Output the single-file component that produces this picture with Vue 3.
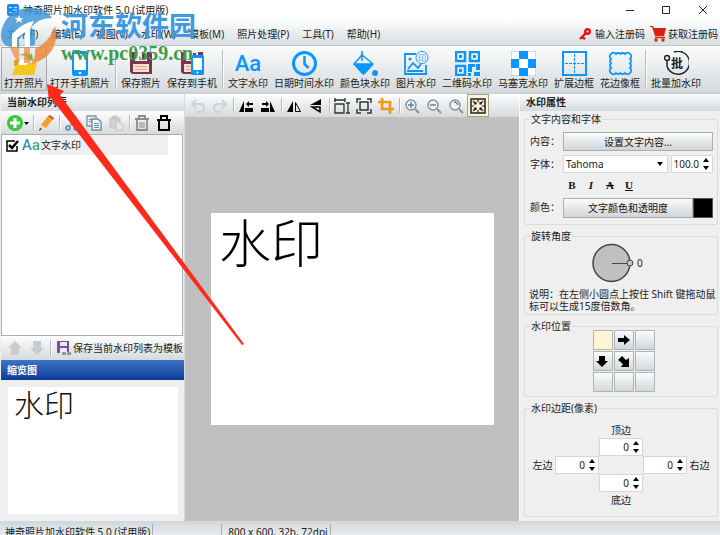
<script setup>
import { ref } from 'vue'

const menus = ['文件(F)', '编辑(E)', '视图(V)', '水印(W)', '模板(M)', '照片处理(P)', '工具(T)', '帮助(H)']

const floppy = '<path fill="#7d3450" d="M1 1h22v22H3l-2-2z"/><path fill="#f4efef" d="M6 1h12v9H6z"/><path fill="#7d3450" d="M13 2h3v7h-3z"/><path fill="#f7dfd0" d="M4 13h16v8H4z"/><path stroke="#e0a98d" d="M6 15.500h12M6 18.500h12"/>'

const tools = [
  { label: '打开照片', active: true, icon: '<path fill="#d9a514" d="M2 9h5l2 2h4v4H2z"/><path fill="#fff" stroke="#ccc" stroke-width=".5" d="M6 14l2-7 9 3-1 6z"/><path fill="#7cb83c" d="M7 5q6-5 11-1l2-2 1 8-7-2 2-2q-4-3-9-1z"/><path fill="#f6c71c" d="M4 14h10l2-2h9l-3 12H0z"/>' },
  { label: '打开手机照片', icon: '<rect x="4" y="0" width="16" height="25" rx="2" fill="#0a96ff"/><path fill="#fff" d="M6 3h12v16H6z"/><circle cx="12" cy="22" r="1.300" fill="#fff"/>' },
  { sep: true },
  { label: '保存照片', icon: floppy },
  { label: '保存到手机', icon: floppy + '<rect x="11" y="4" width="13" height="20" rx="1.500" fill="#0a96ff"/><path fill="#fff" d="M13 7h9v12h-9z"/><circle cx="17.500" cy="21.500" r="1" fill="#fff"/>' },
  { sep: true },
  { label: '文字水印', letters: true },
  { label: '日期时间水印', icon: '<circle cx="12.500" cy="12.500" r="11" fill="none" stroke="#0a96ff" stroke-width="3"/><path fill="none" stroke="#0a96ff" stroke-width="2.500" d="M12.500 5v8l4 4"/>' },
  { label: '颜色块水印', icon: '<path fill="none" stroke="#0a96ff" stroke-width="1.500" d="M9 0v10M8 3l12 10M9 4L1 13h18"/><path fill="#0a96ff" d="M0 13h21l-9 10Q10 25 8 22z"/><circle cx="22" cy="22" r="3" fill="#0a96ff"/>' },
  { label: '图片水印', icon: '<path fill="none" stroke="#0a96ff" stroke-width="1.800" d="M12 3H1v20h21v-9M4 18l5-6 5 5 3-4M3 20h16"/><circle cx="6" cy="8" r="1.500" fill="#0a96ff"/><circle cx="18" cy="6.500" r="6" fill="#fff" stroke="#0a96ff"/><text x="18" y="9.500" font-size="8" text-anchor="middle" fill="#0a96ff">印</text>' },
  { label: '二维码水印', icon: '<path fill="none" stroke="#0a96ff" stroke-width="2.500" d="M1 1h9v9H1zM15 1h9v9h-9zM1 15h9v9H1z"/><path fill="#0a96ff" d="M4 4h3v3H4zM18 4h3v3h-3zM4 18h3v3H4zM13 13h7v3h-3v5h-4zM21 13h4v6h-4zM19 21h6v4h-6zM13 22h3v3h-3z"/>' },
  { label: '马塞克水印', icon: '<path fill="#fff" stroke="#7cc6ff" d="M0 0h25v25H0z"/><path fill="#0a96ff" d="M8 0h9v8H8zM0 8h8v9H0zM17 8h8v9h-8zM8 17h9v8H8z"/>' },
  { label: '扩展边框', icon: '<path fill="none" stroke="#0a96ff" stroke-width="2" d="M1 1h23v23H1z"/><path fill="none" stroke="#0a96ff" stroke-dasharray="3 1" d="M12.500 3v19M3 12.500h19"/>' },
  { label: '花边像框', icon: '<path fill="none" stroke="#0a96ff" stroke-width="1.800" d="M3 8A3 3 0 0 1 3 3 3 3 0 0 1 8 3 3 3 0 0 1 12.500 3 3 3 0 0 1 17 3 3 3 0 0 1 22 3 3 3 0 0 1 22 8 3 3 0 0 1 22 12.500 3 3 0 0 1 22 17 3 3 0 0 1 22 22 3 3 0 0 1 17 22 3 3 0 0 1 12.500 22 3 3 0 0 1 8 22 3 3 0 0 1 3 22 3 3 0 0 1 3 17 3 3 0 0 1 3 12.500 3 3 0 0 1 3 8z"/>' },
  { sep: true },
  { label: '批量加水印', icon: '<path fill="none" stroke="#222" stroke-width="1.500" d="M10 1a11.500 11.500 0 1 1-7 14"/><circle cx="3" cy="7" r="2.500" fill="none" stroke="#222" stroke-width="1.500"/><path stroke="#222" stroke-width="1.500" d="M3 10v5"/><text x="13" y="17" font-size="12" font-weight="700" text-anchor="middle" fill="#222">批</text>' }
]

const magnifier = '<circle cx="7" cy="7" r="5" fill="#f2f4f6" stroke="#8b8f93" stroke-width="1.400"/><path stroke="#8b8f93" stroke-width="2" d="M11 11l4 4"/>'

const canvasTools = [
  { name: '撤销', icon: '<path fill="none" stroke="#cfd1d3" stroke-width="2" d="M6 2L2 6l4 4M2 6h8q4 0 4 4t-4 4H6"/>' },
  { name: '重做', icon: '<path fill="none" stroke="#cfd1d3" stroke-width="2" d="M10 2l4 4-4 4M14 6H6q-4 0-4 4t4 4h3"/>' },
  { sep: true },
  { name: '向左旋转', icon: '<path d="M1 14L6 3v11zM7 10h8v4H7zM8 6l3-3v2h4v2h-4v2z"/>' },
  { name: '向右旋转', icon: '<path d="M15 14L10 3v11zM1 10h8v4H1zM9 6L6 3v2H2v2h4v2z"/>' },
  { sep: true },
  { name: '水平翻转', icon: '<path d="M1 14L7 3v11z"/><path fill="none" stroke="#000" d="M9.500 4.500v9h5z"/>' },
  { name: '垂直翻转', icon: '<path d="M2 7l11-6v6z"/><path fill="none" stroke="#000" stroke-width="1.500" d="M4 9h8v5z"/>' },
  { sep: true },
  { name: '调整大小', icon: '<path fill="none" stroke="#333" stroke-width="1.300" d="M1 6h9v9H1zM0 2h11M1 0v4M11 0v4M14 5v10M12 5h4M12 15h4"/>' },
  { name: '画布大小', icon: '<path fill="none" stroke="#333" stroke-width="1.500" d="M1 5V1h4M11 1h4v4M15 11v4h-4M5 15H1v-4M4 4h8v8H4z"/>' },
  { name: '裁剪', icon: '<path fill="none" stroke="#f39a12" stroke-width="2.600" d="M4 0v11h12M0 4h12v12"/>' },
  { sep: true },
  { name: '放大', icon: magnifier + '<path stroke="#4a86c0" stroke-width="1.500" d="M4 7h6M7 4v6"/>' },
  { name: '缩小', icon: magnifier + '<path stroke="#4a86c0" stroke-width="1.500" d="M4 7h6"/>' },
  { name: '实际大小', icon: magnifier + '<path fill="none" stroke="#4a86c0" stroke-width="1.500" d="M6 4q3 0 4 3"/>' },
  { name: '适合窗口', active: true, icon: '<path fill="none" stroke="#222" stroke-width="1.500" d="M1 1h14v14H1z"/><path fill="none" stroke="#222" stroke-width="1.200" d="M8 1v3M8 12v3M1 8h3M12 8h3M3 3l3 3M13 3l-3 3M3 13l3-3M13 13l-3-3M6 4v2H4M10 4v2h2M6 12v-2H4M10 12v-2h2"/>' }
]

const listTools = [
  { name: '添加', wide: true, icon: '<circle cx="8" cy="8" r="8" fill="#3cc83c"/><path stroke="#fff" stroke-width="3" d="M3 8h10M8 3v10"/><path d="M17 7h5l-2.500 3z"/>' },
  { sep: true },
  { name: '编辑', icon: '<path fill="#f2a22c" d="M3 10l7-9 5 3-7 9z"/><path fill="#e0503c" d="M10 1l2-1 4 3-1 2z"/><path fill="#f3d9b0" d="M3 10l5 3-6 2z"/><path fill="#333" d="M2 13l2 1-3 2z"/>' },
  { sep: true },
  { name: '剪切', icon: '<path stroke="#9a9da0" stroke-width="1.500" d="M12 1L6 11M5 1l6 10"/><circle cx="4" cy="13" r="2" fill="none" stroke="#4f86c0" stroke-width="1.500"/><circle cx="12" cy="13" r="2" fill="none" stroke="#4f86c0" stroke-width="1.500"/>' },
  { name: '复制', icon: '<path fill="#e8ecf0" stroke="#8b9299" stroke-width="1.300" d="M1 1h9v10H1z"/><path fill="#f4f6f8" stroke="#7b848c" stroke-width="1.300" d="M6 4h6l3 3v8H6z"/><path stroke="#5a8abb" d="M8 8.500h5M8 10.500h5M8 12.500h5M3 4.500h3M3 6.500h3"/>' },
  { name: '粘贴', icon: '<path fill="#cfd1d3" stroke="#c2c4c6" d="M2 3h10v10H2zM5 1h4v3H5z"/><path fill="#e6e7e8" stroke="#c0c2c4" d="M8 7h4l3 3v5H8z"/>' },
  { sep: true },
  { name: '删除', icon: '<path fill="none" stroke="#8c8c8c" stroke-width="1.800" d="M1 4h14M5 4V1h6v3M3 5v10h10V5"/><path stroke="#8c8c8c" d="M6 7v6M8 7v6M10 7v6"/>' },
  { name: '全部删除', icon: '<path fill="none" stroke="#000" stroke-width="2" d="M1 5h14M5 5V1h6v4M3 5v10h10V5"/>' }
]

const styles = [
  { name: '粗体', cls: 'bold', text: 'B' },
  { name: '斜体', cls: 'italic', text: 'I' },
  { name: '删除线', cls: 'strike', text: 'A' },
  { name: '下划线', cls: 'under', text: 'U' }
]

const positions = [
  { name: '左上', icon: '', active: true },
  { name: '中上', icon: 'M1 4h6V1l6 5-6 5V8H1z' },
  { name: '右上', icon: '' },
  { name: '左中', icon: 'M3 1h6v5h3l-6 6-6-6h3z' },
  { name: '居中', icon: 'M1 5l4-4 4 4 3-2v9H4l2-3z' },
  { name: '右中', icon: '' },
  { name: '左下', icon: '' },
  { name: '中下', icon: '' },
  { name: '右下', icon: '' }
]

const margins = [
  { key: 'top', label: '顶边' },
  { key: 'left', label: '左边' },
  { key: 'right', label: '右边' },
  { key: 'bottom', label: '底边' }
]

const shown = ref(true)
const font = ref('Tahoma')
const size = ref('100.0')
const margin = ref({ top: 0, left: 0, right: 0, bottom: 0 })
</script>

<template>
  <div class="app" lang="zh-CN">
    <header class="head">
      <div class="title">
        <svg class="app-icon" viewBox="0 0 12 12"><rect width="12" height="12" rx="2" fill="#1e8cf5" /><path stroke="#bfe0ff" d="M2 3.500h3M7 3.500h3M2 8.500h3M7 8.500h3M6 6h4" /></svg>
        <span class="title-text">神奇照片加水印软件 5.0 (试用版)</span>
        <div class="win">
          <button aria-label="最小化"><svg viewBox="0 0 10 10"><path d="M1 5.500h8" /></svg></button>
          <button aria-label="最大化"><svg viewBox="0 0 10 10"><path d="M1.500 1.500h7v7h-7z" /></svg></button>
          <button aria-label="关闭"><svg viewBox="0 0 10 10"><path d="M1 1l8 8M9 1L1 9" /></svg></button>
        </div>
      </div>
      <nav class="menu">
        <a v-for="m in menus" :key="m" href="#">{{ m }}</a>
        <a class="reg first" href="#">
          <svg class="key" viewBox="0 0 12 12"><circle cx="8.500" cy="3.500" r="2.300" fill="none" stroke="#e81313" stroke-width="2.400" /><path fill="none" stroke="#e81313" stroke-width="2.400" d="M7 5l-6 6M3 9l3 2" /></svg>
          输入注册码
        </a>
        <a class="reg" href="#">
          <svg class="cart" viewBox="0 0 16 16"><path fill="#d92312" d="M0 0h3l1 2h12l-2 8H5L2 1H0z" /><path stroke="#d92312" stroke-width="1.500" d="M5 11.500h10" /><circle cx="6" cy="14" r="1.700" fill="#d92312" /><circle cx="13" cy="14" r="1.700" fill="#d92312" /></svg>
          获取注册码
        </a>
      </nav>
    </header>

    <div class="toolbar">
      <template v-for="(t, i) in tools" :key="i">
        <span v-if="t.sep" class="sep"></span>
        <button v-else class="tool" :class="{ active: t.active }">
          <span v-if="t.letters" class="letters">Aa</span>
          <svg v-else viewBox="0 0 25 25" v-html="t.icon"></svg>
          <span>{{ t.label }}</span>
        </button>
      </template>
    </div>

    <main class="body">
      <aside class="left">
        <h2 class="bar-title">当前水印列表</h2>
        <div class="strip list-strip">
          <template v-for="(t, i) in listTools" :key="i">
            <span v-if="t.sep" class="sep"></span>
            <button v-else class="mini" :class="{ wide: t.wide }" :aria-label="t.name">
              <svg :viewBox="t.wide ? '0 0 22 16' : '0 0 16 16'" v-html="t.icon"></svg>
            </button>
          </template>
        </div>
        <div class="list">
          <label class="row">
            <input v-model="shown" type="checkbox">
            <svg class="tick" viewBox="0 0 13 13"><path fill="none" stroke="#000" stroke-width="1.500" d="M11 7v5H1V2h8" /><path fill="none" stroke="#000" stroke-width="2.500" d="M3 6l3 3 6-7" /></svg>
            <span class="aa">Aa</span>
            <span class="name">文字水印</span>
          </label>
        </div>
        <div class="strip save-strip">
          <button class="mini" aria-label="上移"><svg viewBox="0 0 16 16"><path fill="#c9cccf" d="M8 1l7 7h-3v7H4V8H1z" /></svg></button>
          <button class="mini" aria-label="下移"><svg viewBox="0 0 16 16"><path fill="#c9cccf" d="M8 15l7-7h-3V1H4v7H1z" /></svg></button>
          <span class="sep"></span>
          <button class="save">
            <svg viewBox="0 0 16 16"><path fill="#7b4fa0" d="M1 1h12v12H1z" /><path fill="#eee8f4" d="M4 2h7v4H4zM4 8h7v5H4z" /><path stroke="#999" stroke-width="3" stroke-dasharray="4 1" d="M6 13.500h9" /></svg>
            保存当前水印列表为模板
          </button>
        </div>
        <h2 class="blue-title">缩览图</h2>
        <div class="thumb-wrap"><div class="thumb">水印</div></div>
      </aside>

      <section class="center">
        <div class="strip canvas-strip">
          <template v-for="(t, i) in canvasTools" :key="i">
            <span v-if="t.sep" class="sep"></span>
            <button v-else class="mini" :class="{ active: t.active }" :aria-label="t.name">
              <svg viewBox="0 0 16 16" v-html="t.icon"></svg>
            </button>
          </template>
        </div>
        <div class="stage"><div class="photo">水印</div></div>
      </section>

      <aside class="right">
        <h2 class="bar-title">水印属性</h2>
        <div class="groups">
          <fieldset class="text-group">
            <legend>文字内容和字体</legend>
            <div class="field"><span class="lab">内容：</span><button class="btn">设置文字内容...</button></div>
            <div class="field font-row">
              <label class="lab" for="font">字体：</label>
              <div class="select">
                <select id="font" v-model="font"><option>Tahoma</option></select>
                <svg viewBox="0 0 6 4"><path d="M0 0h6L3 4z" /></svg>
              </div>
              <div class="spin size">
                <input v-model="size" type="text" aria-label="字号">
                <svg viewBox="0 0 6 12"><path d="M0 4l3-4 3 4zM0 8h6l-3 4z" /></svg>
              </div>
            </div>
            <div class="styles">
              <button v-for="s in styles" :key="s.cls" :class="s.cls" :aria-label="s.name">{{ s.text }}</button>
            </div>
            <div class="field color-row">
              <span class="lab">颜色：</span><button class="btn">文字颜色和透明度</button><button class="swatch" aria-label="文字颜色"></button>
            </div>
          </fieldset>

          <fieldset class="angle-group">
            <legend>旋转角度</legend>
            <div class="dial">
              <svg viewBox="0 0 42 40"><circle cx="19.500" cy="20" r="18.500" fill="#c0c0c0" stroke="#444" stroke-width="1.500" /><path stroke="#444" d="M20 20.500h15" /><circle cx="38" cy="20" r="3" fill="#c0c0c0" stroke="#444" /></svg>
              <output>0</output>
            </div>
            <p>说明：在左侧小圆点上按住 Shift 键拖动鼠标可以生成15度倍数角。</p>
          </fieldset>

          <fieldset class="pos-group">
            <legend>水印位置</legend>
            <div class="pos">
              <button v-for="p in positions" :key="p.name" :class="{ active: p.active }" :aria-label="p.name">
                <svg v-if="p.icon" viewBox="0 0 13 13"><path :d="p.icon" /></svg>
              </button>
            </div>
          </fieldset>

          <fieldset class="margin-group">
            <legend>水印边距(像素)</legend>
            <div class="margins">
              <template v-for="m in margins" :key="m.key">
                <label :class="'l-' + m.key" :for="'m-' + m.key">{{ m.label }}</label>
                <div class="spin" :class="'s-' + m.key">
                  <input :id="'m-' + m.key" v-model="margin[m.key]" type="text">
                  <svg viewBox="0 0 6 12"><path d="M0 4l3-4 3 4zM0 8h6l-3 4z" /></svg>
                </div>
              </template>
            </div>
          </fieldset>
        </div>
      </aside>
    </main>

    <footer class="status">
      <span class="cell name-cell">神奇照片加水印软件 5.0 (试用版)</span>
      <span class="cell blank"></span>
      <span class="cell">800 x 600, 32b, 72dpi</span>
    </footer>

    <div class="mark">
      <svg viewBox="0 0 60 60">
        <path fill="#3f98d8" opacity=".85" d="M1 31C2 14 16 3 31 4c10 0 17 4 21 10-10 0-17 4-21 10l4 2v14c-2 2-4 2-6 2V27l-10 8v8C10 44 1 42 1 31z" />
        <path fill="#f0873a" opacity=".85" d="M55 22c4 14-2 30-18 36l-6 2c4-5 4-10 4-15 9-4 16-12 20-23z" />
        <path fill="#f0873a" opacity=".7" d="M10 43h9v15q-6-4-9-15zM24 44l6-1v16h-6z" />
        <path fill="#fff" d="M12 30q12-12 22-13l-4 8v18h-5V28l-8 6v9h-5z" />
        <path fill="#fff" d="M19 11l1 3h3l-2 2 1 3-3-2-3 2 1-3-2-2h3z" />
      </svg>
      <div class="mark-text">
        <strong>河东软件园</strong>
        <em>www.pc0359.cn</em>
      </div>
    </div>
    <svg class="arrow" viewBox="0 0 200 265"><path fill="#ff2a1c" d="M0 0l17 7-4 4 184 249-2 1L4 14l-2 3z" /></svg>
  </div>
</template>

<style>
body {
  margin: 0;
  overflow: hidden;
}
</style>

<style scoped>
* {
  box-sizing: border-box;
}
.app {
  position: relative;
  display: flex;
  flex-direction: column;
  height: 100vh;
  overflow: hidden;
  background: #efefef;
  color: #222;
  font: 10px/12px "Noto Sans", "Noto Sans CJK SC", sans-serif;
}
button,
input,
select {
  margin: 0;
  padding: 0;
  border: 0;
  background: none;
  color: inherit;
  font: inherit;
}
a {
  color: inherit;
  text-decoration: none;
  white-space: nowrap;
}
h2,
p {
  margin: 0;
}
svg {
  display: block;
  flex: none;
}

/* Title and menu */
.head {
  height: 46px;
  flex: none;
  background: linear-gradient(#fff 40%, #d9dfe3);
  border-bottom: 1px solid #bfc5c9;
}
.title {
  display: flex;
  align-items: center;
  height: 22px;
  padding: 0 0 3px 7px;
}
.app-icon {
  width: 12px;
  height: 12px;
  margin-right: 4px;
}
.win {
  display: flex;
  margin-left: auto;
}
.win button {
  display: grid;
  place-items: center;
  width: 36px;
  height: 18px;
}
.win svg {
  width: 10px;
  height: 10px;
  fill: none;
  stroke: #222;
}
.win button:last-child {
  margin-right: -2px;
  width: 38px;
}
.menu {
  display: flex;
  align-items: center;
  gap: 13px;
  height: 23px;
  padding: 0 2px 0 7px;
}
.reg {
  display: flex;
  align-items: center;
  gap: 4px;
  margin-left: -8px;
}
.reg.first {
  margin-left: auto;
}
.key {
  width: 12px;
  height: 12px;
}
.cart {
  width: 16px;
  height: 16px;
  margin-right: -2px;
}

/* Main toolbar */
.toolbar {
  display: flex;
  flex: none;
  height: 48px;
  padding: 1px;
  background: linear-gradient(#fbfcfc, #d5dadd);
  border-bottom: 2px solid #ccd1d5;
}
.tool {
  display: flex;
  flex-direction: column;
  align-items: center;
  gap: 1px;
  padding: 3px 2px 0;
  border: 1px solid transparent;
  white-space: nowrap;
}
.tool svg {
  width: 25px;
  height: 25px;
}
.tool.active {
  border-color: #a4a9ac;
  background: linear-gradient(#eef0f1, #d3d8db);
}
.letters {
  height: 25px;
  color: #0a96ff;
  font: 500 22px/25px Roboto, sans-serif;
}
.sep {
  flex: none;
  width: 1px;
  margin: 3px 2px;
  background: #b5babd;
  box-shadow: 1px 0 #fff;
}

/* Panels */
.body {
  display: flex;
  flex: 1;
  min-height: 0;
}
.bar-title {
  height: 17px;
  padding-left: 6px;
  background: linear-gradient(#fafbfb, #d4dade);
  font-size: 10px;
  line-height: 17px;
}
.strip {
  display: flex;
  align-items: stretch;
  height: 23px;
  background: linear-gradient(#fdfdfd, #d5dadd);
}
.mini {
  display: grid;
  place-items: center;
  width: 22px;
  padding: 0;
}
.strip .sep {
  width: 1px;
  margin: 4px 1px 4px 2px;
}
.mini svg {
  width: 16px;
  height: 16px;
}
.left {
  display: flex;
  flex-direction: column;
  flex: none;
  width: 185px;
  padding-left: 1px;
  border-right: 1px solid #d9d9d9;
}
.list-strip {
  padding-left: 4px;
}
.mini.wide {
  width: 26px;
}
.mini.wide svg {
  width: 22px;
}
.list {
  flex: none;
  height: 202px;
  margin-right: 1px;
  background: #fff;
  border: 1px solid #a9aeb2;
}
.row {
  display: flex;
  align-items: center;
  height: 20px;
  margin-right: 14px;
  padding-left: 4px;
  background: linear-gradient(90deg, #fff 38px, #efefef 38px);
}
.row input {
  position: absolute;
  width: 13px;
  height: 13px;
  opacity: 0;
}
.tick {
  width: 13px;
  height: 13px;
}
.aa {
  margin: 0 1px 0 3px;
  background: linear-gradient(90deg, #2a86d8, #35b56a);
  background-clip: text;
  color: transparent;
  font: 500 15px/18px Roboto, sans-serif;
}
.save-strip {
  height: 24px;
  padding-left: 3px;
}
.save {
  display: flex;
  align-items: center;
  gap: 1px;
  margin-left: 4px;
  white-space: nowrap;
}
.save svg {
  width: 16px;
  height: 16px;
}
.blue-title {
  height: 20px;
  padding-left: 6px;
  background: linear-gradient(#3f74c8, #0a3c98);
  color: #fff;
  font-size: 10px;
  line-height: 20px;
}
.thumb-wrap {
  flex: 1;
  padding: 7px 6px 7px 7px;
}
.thumb {
  height: 100%;
  padding-left: 6px;
  background: #fff;
  color: #111;
  font-size: 30px;
  font-weight: 300;
  line-height: 36px;
}
.center {
  display: flex;
  flex-direction: column;
  flex: 1;
  min-width: 0;
}
.canvas-strip {
  padding-left: 2px;
}
.mini.active {
  background: #fbf3d8;
  box-shadow: inset 0 0 0 1px #a79f88;
}
.stage {
  display: grid;
  flex: 1;
  place-items: center;
  padding-left: 1px;
  background: #c0c0c0;
}
.photo {
  width: 85%;
  aspect-ratio: 4 / 3;
  padding-left: 8px;
  background: #fff;
  color: #000;
  font-size: 52px;
  font-weight: 300;
  line-height: 60px;
}

/* Properties */
.right {
  flex: none;
  width: 201px;
  border-left: 1px solid #fafafa;
}
.groups {
  display: flex;
  flex-direction: column;
  gap: 5px;
  padding: 2px 2px 0 4px;
}
fieldset {
  min-width: 0;
  margin: 0;
  padding: 0 4px;
  border: 1px solid #dcdcdc;
  border-radius: 2px;
}
legend {
  height: 12px;
  margin-left: 1px;
  padding: 0 1px;
  white-space: nowrap;
}
.text-group {
  display: grid;
  gap: 4px;
  padding-top: 7px;
  padding-bottom: 6px;
}
.field {
  display: flex;
  height: 19px;
}
.lab {
  flex: none;
  width: 34px;
  padding-left: 1px;
  line-height: 19px;
}
.btn {
  flex: 1;
  background: linear-gradient(#fbfbfb, #cfd5d9);
  border: 1px solid #a9aeb1;
  color: #111;
}
.font-row {
  height: 18px;
}
.select {
  position: relative;
  flex: 1;
  background: #fff;
  border: 1px solid #d6d6d6;
}
.select select {
  width: 100%;
  height: 16px;
  padding-left: 2px;
  appearance: none;
}
.select svg {
  position: absolute;
  top: 6px;
  right: 4px;
  width: 6px;
  height: 4px;
  pointer-events: none;
}
.spin {
  display: flex;
  align-items: center;
  padding-right: 3px;
  background: #fff;
  border: 1px solid #d6d6d6;
}
.spin input {
  width: 100%;
  min-width: 0;
  padding-right: 4px;
  text-align: right;
  outline: 0;
}
.spin svg {
  width: 6px;
  height: 12px;
}
.size {
  width: 42px;
  margin-left: 3px;
}
.styles {
  display: flex;
  gap: 5px;
  height: 17px;
  padding-left: 36px;
}
.styles button {
  width: 14px;
  color: #111;
  font: 700 11px/17px "Liberation Serif", serif;
}
.styles .italic {
  font-style: italic;
}
.styles .strike {
  text-decoration: line-through;
}
.styles .under {
  text-decoration: underline;
}
.color-row {
  height: 20px;
}
.swatch {
  width: 20px;
  background: #000;
  border: 1px solid #555;
}
.angle-group {
  padding-bottom: 2px;
}
.dial {
  display: flex;
  align-items: center;
  gap: 3px;
  height: 42px;
  padding-left: 63px;
}
.dial svg {
  width: 42px;
  height: 40px;
}
p {
  margin: 4px -4px 0 0;
}
.pos {
  display: grid;
  grid-template-columns: repeat(3, 20px);
  grid-auto-rows: 20px;
  gap: 1px;
  justify-content: center;
  margin-top: -2px;
  padding: 0 0 4px 5px;
}
.pos button {
  display: grid;
  place-items: center;
  background: linear-gradient(#fbfbfb, #d2d8db);
  border: 1px solid #b0b4b7;
}
.pos button.active {
  background: #fdf5d4;
}
.pos svg {
  width: 13px;
  height: 13px;
}
.margins {
  display: grid;
  grid-template:
    ". . lt . ." 16px
    ". . t . ." 18px
    "ll l . r lr" 18px
    ". . b . ." 18px
    ". . lb . ." 16px / 25px 44px 44px 44px 25px;
  justify-content: center;
  padding: 8px 0;
}
.margins label {
  place-self: center;
}
.l-top { grid-area: lt; }
.l-left { grid-area: ll; }
.l-right { grid-area: lr; }
.l-bottom { grid-area: lb; }
.s-top { grid-area: t; }
.s-left { grid-area: l; }
.s-right { grid-area: r; }
.s-bottom { grid-area: b; }

/* Status bar */
.status {
  display: flex;
  flex: none;
  height: 14px;
  overflow: hidden;
  padding-left: 5px;
  background: linear-gradient(#d0d7db, #e8ecee);
  white-space: nowrap;
}
.cell {
  height: 22px;
  margin-top: 3px;
  padding: 2px 2px 0 0;
  border-right: 1px solid #a8adb0;
}
.blank {
  width: 69px;
  margin-right: 6px;
}

/* Site mark and pointer over the window */
.mark {
  position: absolute;
  top: 4px;
  left: 0;
  display: flex;
  gap: 1px;
  pointer-events: none;
}
.mark svg {
  width: 60px;
  height: 60px;
}
.mark-text {
  display: flex;
  flex-direction: column;
  padding-top: 4px;
}
.mark strong {
  color: #3d9ae0;
  font: 700 27px/34px "Noto Sans CJK SC", sans-serif;
}
.mark em {
  color: #3f9e4a;
  font: 700 20px/22px "Liberation Serif", serif;
}
.arrow {
  position: absolute;
  top: 84px;
  left: 47px;
  width: 200px;
  height: 265px;
  pointer-events: none;
}
</style>
